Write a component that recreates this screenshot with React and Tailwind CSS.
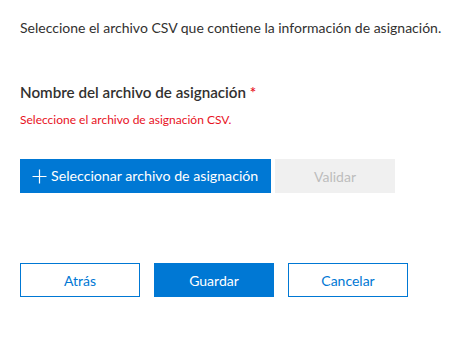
import React from "react";

export default function App() {
  return (
    <div className="w-[464px] h-[343px] bg-white px-5 font-['Lato',sans-serif] text-[#323130]">
      <p className="pt-[18px] whitespace-nowrap text-[14px] leading-[20px]">
        Seleccione el archivo CSV que contiene la información de asignación.
      </p>

      <div className="mt-[43px]">
        <div className="whitespace-nowrap text-[15.2px] font-semibold leading-[22px]">
          Nombre del archivo de asignación <span className="text-[#e81123]">*</span>
        </div>
        <div className="mt-[10px] whitespace-nowrap text-[12px] leading-[14px] text-[#e81123]">
          Seleccione el archivo de asignación CSV.
        </div>
      </div>

      <div className="mt-[32px] flex gap-[4px]">
        <button className="flex h-[34px] w-[251px] items-center gap-[4px] bg-[#0078d4] pl-[12px] text-[14.2px] whitespace-nowrap text-white">
          <svg width="15" height="15" viewBox="0 0 15 15" className="shrink-0">
            <path d="M7.5 0.5v14M0.5 7.5h14" stroke="white" strokeWidth="1.2" fill="none" />
          </svg>
          <span>Seleccionar archivo de asignación</span>
        </button>
        <button className="h-[34px] w-[120px] bg-[#f0f0f0] text-[14px] text-[#bdbdbd]">Validar</button>
      </div>

      <div className="mt-[70px] flex gap-[14px]">
        <button className="h-[34px] w-[120px] border border-[#0078d4] text-[14px] text-[#0078d4]">Atrás</button>
        <button className="h-[34px] w-[120px] bg-[#0078d4] text-[14px] text-white">Guardar</button>
        <button className="h-[34px] w-[120px] border border-[#0078d4] text-[14px] text-[#0078d4]">Cancelar</button>
      </div>
    </div>
  );
}
